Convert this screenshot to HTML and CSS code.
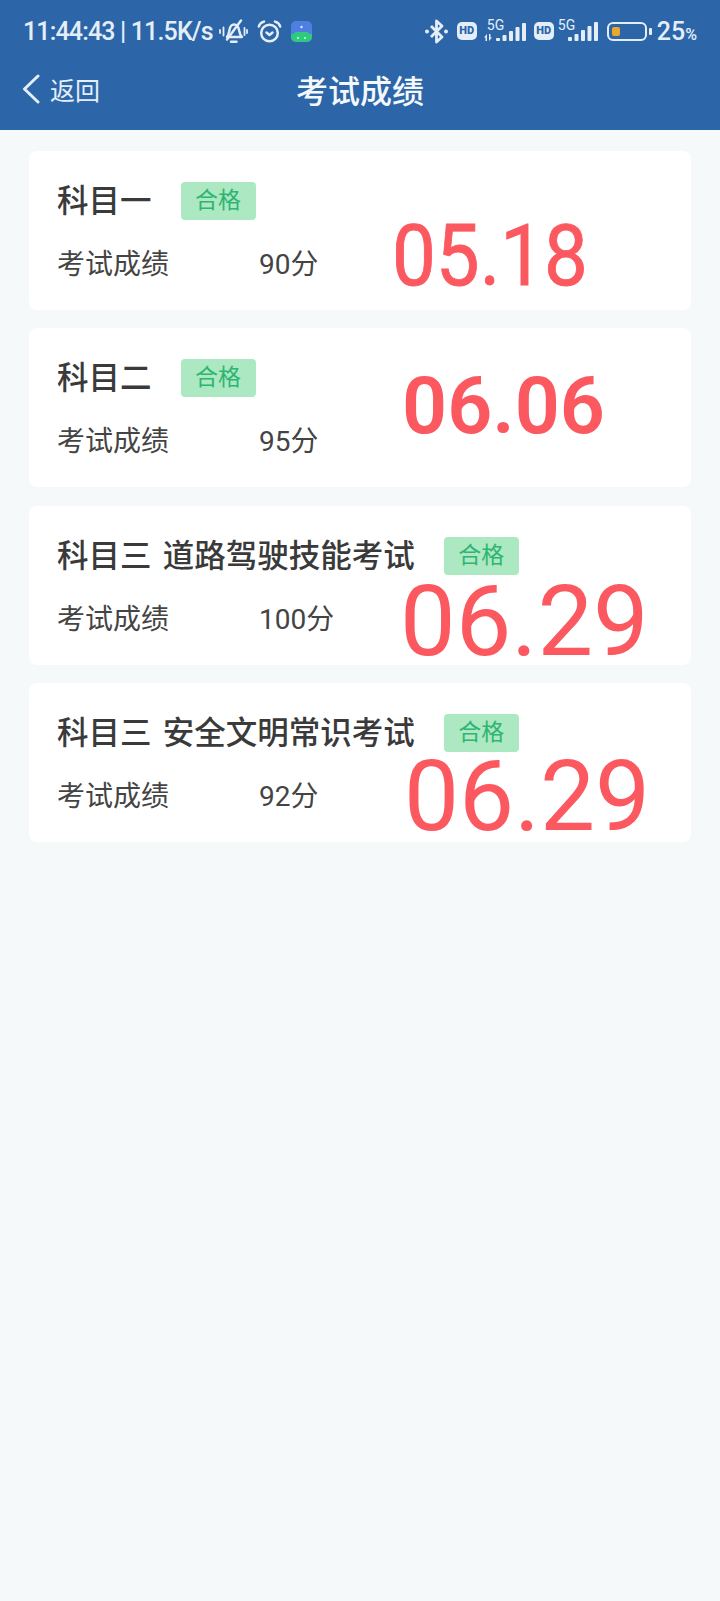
FILE: index.html
```html
<!DOCTYPE html>
<html lang="zh-CN">
<head>
    <meta charset="UTF-8">
    <meta name="viewport" content="width=device-width, initial-scale=1.0">
    <title>考试成绩</title>
    <link rel="stylesheet" href="styles.css">
</head>
<body>
    <header class="app-header">
        <!-- Status bar -->
        <div class="status-bar">
            <div class="status-left">
                <span class="clock">11:44:43 | 11.5K/s</span>
                <svg class="icon-mute" width="29" height="25" viewBox="0 0 29 25" fill="none" stroke="currentColor" stroke-width="2.400" stroke-linecap="round" stroke-linejoin="round">
                    <path d="M8 18c1.500-2 2-4 2.500-7 .5-3 2-5.500 4.500-5.500s4.500 2.500 5 5.500c.5 3 1 5 3 7z"/>
                    <path d="M12 22.800h5.500"/>
                    <path d="M8 20.500L22 1.500"/>
                    <path d="M1 11v3M4.500 8.500v8M25.500 9v7M28 11v3" stroke-width="1.800"/>
                </svg>
                <svg class="icon-alarm" width="25" height="23" viewBox="0 0 25 23" fill="none" stroke="currentColor" stroke-width="2.500" stroke-linecap="round" stroke-linejoin="round">
                    <circle cx="12.500" cy="13" r="8.300"/>
                    <path d="M9.500 12.500l3 2.500 3-2.500"/>
                    <path d="M1.800 6.500C2.500 4 4.500 2.300 7 1.600M23.200 6.500C22.500 4 20.500 2.300 18 1.600"/>
                </svg>
                <svg class="icon-app" width="21" height="21" viewBox="0 0 21 21">
                    <rect width="21" height="21" rx="5" fill="#4f7fe0"/>
                    <path d="M3 13c0-1 1-2 2-2h11c1 0 2 1 2 2l3 0v3a5 5 0 0 1-5 5H5a5 5 0 0 1-5-5v-3z" fill="#2ecb7f"/>
                    <circle cx="10.500" cy="6" r="1.200" fill="#dfe9fb"/>
                    <circle cx="7" cy="17" r="1" fill="#dff7ea"/>
                    <circle cx="14" cy="17" r="1" fill="#dff7ea"/>
                </svg>
            </div>
            <div class="status-right">
                <svg class="icon-bt" width="23" height="25" viewBox="0 0 23 25" fill="none" stroke="currentColor" stroke-width="2.800" stroke-linejoin="round">
                    <path d="M6 7l11 11-5.500 5V2l5.500 5L6 18"/>
                    <circle cx="2" cy="12.500" r="2" fill="currentColor" stroke="none"/>
                    <circle cx="21" cy="12.500" r="2" fill="currentColor" stroke="none"/>
                </svg>
                <span class="hd hd-first">HD</span>
                <div class="signal signal-first">
                    <span class="net net-first">5G</span>
                    <svg width="42" height="21" viewBox="0 0 42 21" fill="currentColor">
                        <path d="M0 16.500l3-3.500v7h-1.500v-3.500zM5 13h1.500v3.500H8L5 20z"/>
                        <rect x="12" y="17" width="4" height="3" rx="1"/>
                        <rect x="18.500" y="14" width="4" height="6" rx="1"/>
                        <rect x="25" y="10" width="4" height="10" rx="1"/>
                        <rect x="31.500" y="6" width="4" height="14" rx="1"/>
                        <rect x="38" y="2" width="4" height="18" rx="1"/>
                    </svg>
                </div>
                <span class="hd hd-second">HD</span>
                <div class="signal signal-second">
                    <span class="net">5G</span>
                    <svg width="40" height="21" viewBox="0 0 40 21" fill="currentColor">
                        <rect x="10" y="16" width="4" height="4" rx="1"/>
                        <rect x="16.500" y="13" width="4" height="7" rx="1"/>
                        <rect x="23" y="9" width="4" height="11" rx="1"/>
                        <rect x="29.500" y="5" width="4" height="15" rx="1"/>
                        <rect x="36" y="1" width="4" height="19" rx="1"/>
                    </svg>
                </div>
                <div class="battery">
                    <div class="battery-body"><div class="battery-level"></div></div>
                    <div class="battery-cap"></div>
                </div>
                <span class="percent">25<small>%</small></span>
            </div>
        </div>
        <!-- Nav bar -->
        <nav class="nav-bar">
            <a class="back" href="#">
                <svg width="18" height="30" viewBox="0 0 18 30" fill="none" stroke="currentColor" stroke-width="3" stroke-linecap="round" stroke-linejoin="round">
                    <path d="M16 2L2.500 15 16 28"/>
                </svg>
                返回
            </a>
            <h1>考试成绩</h1>
        </nav>
    </header>

    <main class="score-list">
        <section class="card">
            <div class="card-title"><h2>科目一</h2><span class="badge">合格</span></div>
            <div class="card-row"><span class="label">考试成绩</span><span class="score">90分</span></div>
            <div class="date date-a">05.18</div>
        </section>
        <section class="card">
            <div class="card-title"><h2>科目二</h2><span class="badge">合格</span></div>
            <div class="card-row"><span class="label">考试成绩</span><span class="score">95分</span></div>
            <div class="date date-b">06.06</div>
        </section>
        <section class="card">
            <div class="card-title"><h2>科目三 道路驾驶技能考试</h2><span class="badge">合格</span></div>
            <div class="card-row"><span class="label">考试成绩</span><span class="score">100分</span></div>
            <div class="date date-c">06.29</div>
        </section>
        <section class="card">
            <div class="card-title"><h2>科目三 安全文明常识考试</h2><span class="badge">合格</span></div>
            <div class="card-row"><span class="label">考试成绩</span><span class="score">92分</span></div>
            <div class="date date-d">06.29</div>
        </section>
    </main>
</body>
</html>
```

FILE: styles.css
```css
/* Global Styles */
* {
    box-sizing: border-box;
}

body {
    margin: 0;
    min-height: 1601px;
    background: #f5f9fa;
    color: #333;
    font-family: "Roboto", "Noto Sans CJK SC", sans-serif;
}

/* Header */
.app-header {
    height: 130px;
    background: #2c66a8;
    color: #e4eef8;
}

.status-bar {
    height: 62px;
    padding: 0 23px;
    display: flex;
    justify-content: space-between;
    align-items: center;
}

.status-left,
.status-right {
    display: flex;
    align-items: center;
}

.clock {
    font-size: 25px;
    font-weight: 500;
    letter-spacing: -0.85px;
    white-space: nowrap;
}

.icon-mute {
    margin-left: 6px;
}

.icon-alarm {
    margin-left: 9px;
}

.icon-app {
    margin-left: 9px;
}

.hd {
    width: 20px;
    height: 18px;
    border-radius: 5px;
    background: #e4eef8;
    color: #2c66a8;
    font-size: 11px;
    font-weight: 900;
    line-height: 18px;
    text-align: center;
}

.hd-first {
    margin-left: 9px;
}

.hd-second {
    margin-left: 8px;
}

.signal {
    position: relative;
    display: flex;
}

.signal-first {
    margin-left: 7px;
}

.signal-second {
    margin-left: 4px;
}

.net {
    position: absolute;
    top: -3px;
    left: 0;
    font-size: 14px;
    line-height: 14px;
}

.net-first {
    left: 3px;
}

.battery {
    margin-left: 9px;
    display: flex;
    align-items: center;
}

.battery-body {
    width: 40px;
    height: 19px;
    padding: 3px;
    border: 2px solid #e4eef8;
    border-radius: 6px;
}

.battery-level {
    width: 8px;
    height: 100%;
    border-radius: 2px;
    background: #e9a82c;
}

.battery-cap {
    width: 3px;
    height: 7px;
    margin-left: 2px;
    border-radius: 1px;
    background: #e4eef8;
}

.percent {
    margin-left: 5px;
    font-size: 25px;
    font-weight: 500;
}

.percent small {
    font-size: 16px;
    font-weight: 500;
}

.nav-bar {
    position: relative;
    height: 68px;
    padding-bottom: 15px;
    display: flex;
    align-items: center;
    justify-content: center;
}

.back {
    position: absolute;
    left: 22px;
    display: flex;
    align-items: center;
    gap: 10px;
    color: #e4eef8;
    font-size: 25px;
    text-decoration: none;
}

.nav-bar h1 {
    margin: 0;
    color: #f4f8fc;
    font-size: 32px;
    font-weight: 500;
}

/* Score cards */
.score-list {
    padding: 21px 29px;
    display: flex;
    flex-direction: column;
    gap: 18.3px;
}

.card {
    position: relative;
    height: 159px;
    padding: 31px 28px 0;
    border-radius: 8px;
    background: #fff;
}

.card-title {
    display: flex;
    align-items: flex-start;
    gap: 29px;
}

.card-title h2 {
    margin: 1px 0 0;
    color: #3a3a3a;
    font-size: 31.5px;
    font-weight: 500;
    line-height: 38px;
    word-spacing: 3.5px;
}

.badge {
    width: 75px;
    height: 38px;
    border-radius: 4px;
    background: #ace8c2;
    color: #2fb573;
    font-size: 23px;
    line-height: 38px;
    text-align: center;
}

.card-row {
    margin-top: 25px;
    display: flex;
    align-items: center;
    font-size: 28px;
    line-height: 38px;
}

.label {
    width: 202px;
    color: #444;
}

.score {
    color: #444;
}

/* Date stamps lying over the cards */
.date {
    position: absolute;
    color: #fb5860;
    line-height: 0.72;
    white-space: nowrap;
    transform-origin: left top;
}

.date-a {
    top: 75px;
    left: 363px;
    font-size: 78px;
    -webkit-text-stroke: 0.8px #fb5860;
    transform: scaleY(1.100);
}

.date-b {
    top: 50px;
    left: 373px;
    font-size: 79px;
    font-weight: 600;
}

.date-c {
    top: 80px;
    left: 371px;
    font-size: 99px;
}

.date-d {
    top: 79px;
    left: 375px;
    font-size: 98px;
}
```
